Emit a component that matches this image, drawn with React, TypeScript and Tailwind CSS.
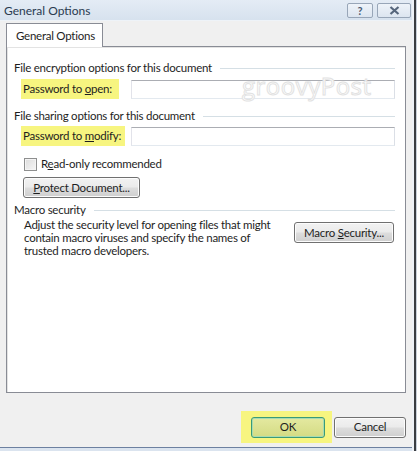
import type { ReactNode } from 'react'

function WinButton({
  children,
  className = '',
}: {
  children: ReactNode
  className?: string
}) {
  return (
    <div
      className={`flex h-[21px] items-center justify-center whitespace-nowrap rounded-[3px] border border-[#707070] bg-[linear-gradient(#f2f2f2_0%,#ebebeb_48%,#dddddd_52%,#cfcfcf_100%)] shadow-[inset_0_0_0_1px_#fcfcfc] ${className}`}
    >
      {children}
    </div>
  )
}

function SectionHeader({ label, className = '' }: { label: string; className?: string }) {
  return (
    <div className={`flex h-[16px] items-center gap-[8px] pr-[10px] ${className}`}>
      <span className="whitespace-nowrap leading-[16px]">{label}</span>
      <span className="h-px flex-1 bg-[#d5dfe5]" />
    </div>
  )
}

function PasswordRow({
  label,
  width,
  className = '',
  children,
}: {
  label: ReactNode
  width: string
  className?: string
  children?: ReactNode
}) {
  return (
    <div className={`relative flex items-center ${className}`}>
      <div className={`ml-[7px] flex h-[20px] items-center whitespace-nowrap bg-[#f7f580] pl-[2px] ${width}`}>
        {label}
      </div>
      <div className="absolute left-[117px] top-[1px] h-[19px] w-[264px] border border-[#abadb3] border-b-[#e3e9ef] border-l-[#e2e3ea] border-r-[#dbdfe6] bg-white" />
      {children}
    </div>
  )
}

export default function App() {
  return (
    <div className="flex h-[451px] w-[417px] bg-[#f0f0f0] font-['Lato',sans-serif] text-[11.5px] tracking-[-0.25px] text-[#1e1e1e]">
      <div className="flex flex-1 flex-col">
        {/* title bar */}
        <div className="flex h-[21px] items-center bg-[linear-gradient(#e4ecf5,#d6e1ee)] pl-[4px] pr-[1px] shadow-[inset_0_-1px_0_#eef3f8]">
          <span className="whitespace-nowrap text-[12px] leading-none tracking-normal text-[#2a3a50]">General Options</span>
          <div className="ml-auto flex gap-[4px]">
            <div className="flex h-[15px] w-[26px] items-center justify-center rounded-[2px] border border-[#98a6b8] bg-[linear-gradient(#eef3f9,#dce5f0)] text-[11px] font-bold leading-none text-[#4a5a70]">
              ?
            </div>
            <div className="flex h-[15px] w-[34px] items-center justify-center rounded-[2px] border border-[#98a6b8] bg-[linear-gradient(#eef3f9,#dce5f0)]">
              <svg width="11" height="9" viewBox="0 0 11 9">
                <path d="M1.5 1 L9.5 8 M9.5 1 L1.5 8" stroke="#56667c" strokeWidth="2.2" />
              </svg>
            </div>
          </div>
        </div>

        <div className="flex flex-1 flex-col px-[6px]">
          {/* tab */}
          <div className="mt-[2px] flex">
            <div className="relative z-10 -mb-px flex h-[24px] w-[97px] items-center whitespace-nowrap border border-b-0 border-[#898c95] bg-white pl-[9px]">
              General Options
            </div>
          </div>

          {/* panel */}
          <div className="h-[347px] border border-[#898c95] bg-white pl-[7px] shadow-[inset_1px_1px_0_#e3e3e3]">
            <SectionHeader label="File encryption options for this document" className="mt-[13px]" />
            <PasswordRow
              className="mt-[3px]"
              width="w-[98px]"
              label={
                <span>
                  Password to <span className="underline">o</span>pen:
                </span>
              }
            >
              <span className="pointer-events-none absolute left-[228px] top-[-5px] whitespace-nowrap font-['Open_Sans',sans-serif] text-[24px] leading-none tracking-[0.5px] text-white [-webkit-text-stroke:1px_#e2e2e2]">
                groovyPost
              </span>
            </PasswordRow>

            <SectionHeader label="File sharing options for this document" className="mt-[9px]" />
            <PasswordRow
              className="mt-[2px]"
              width="w-[104px]"
              label={
                <span>
                  Password to <span className="underline">m</span>odify:
                </span>
              }
            />

            <div className="mt-[10px] flex h-[16px] items-center pl-[10px]">
              <span className="h-[13px] w-[13px] border border-[#8e8f8f] bg-[linear-gradient(135deg,#dcdcdc,#f6f6f6)] shadow-[inset_0_0_0_1px_#f4f4f4]" />
              <span className="ml-[4px] whitespace-nowrap">
                R<span className="underline">e</span>ad-only recommended
              </span>
            </div>

            <WinButton className="ml-[9px] mt-[5px] w-[117px]">
              <span>
                <span className="underline">P</span>rotect Document...
              </span>
            </WinButton>

            <SectionHeader label="Macro security" className="mt-[4px]" />
            <div className="flex items-start pr-[11px]">
              <p className="ml-[10px] whitespace-nowrap leading-[13px]">
                Adjust the security level for opening files that might
                <br />
                contain macro viruses and specify the names of
                <br />
                trusted macro developers.
              </p>
              <WinButton className="ml-auto mt-[4px] w-[100px]">
                <span>
                  Macro <span className="underline">S</span>ecurity...
                </span>
              </WinButton>
            </div>
          </div>

          {/* buttons */}
          <div className="mt-[18px] flex justify-end gap-[2px]">
            <div className="flex h-[32px] items-center bg-[#f7f580] pl-[10px] pr-[7px]">
              <div className="flex h-[21px] w-[74px] items-center justify-center rounded-[3px] border border-[#3b9a78] bg-[linear-gradient(#e4e9a0,#d4db84)] shadow-[inset_0_0_0_1px_#a7dcb0]">
                OK
              </div>
            </div>
            <div className="flex h-[32px] items-center">
              <WinButton className="w-[72px]">Cancel</WinButton>
            </div>
          </div>
        </div>

        <div className="mt-auto h-[4px] border-t border-[#6d80a0] bg-[#dbe4ef]" />
      </div>

      {/* window frame */}
      <div className="flex w-[5px]">
        <div className="w-[2px] bg-[#eef2f7]" />
        <div className="w-[2px] bg-[#3a3d42]" />
        <div className="w-[1px] bg-[#c8d0da]" />
      </div>
    </div>
  )
}
